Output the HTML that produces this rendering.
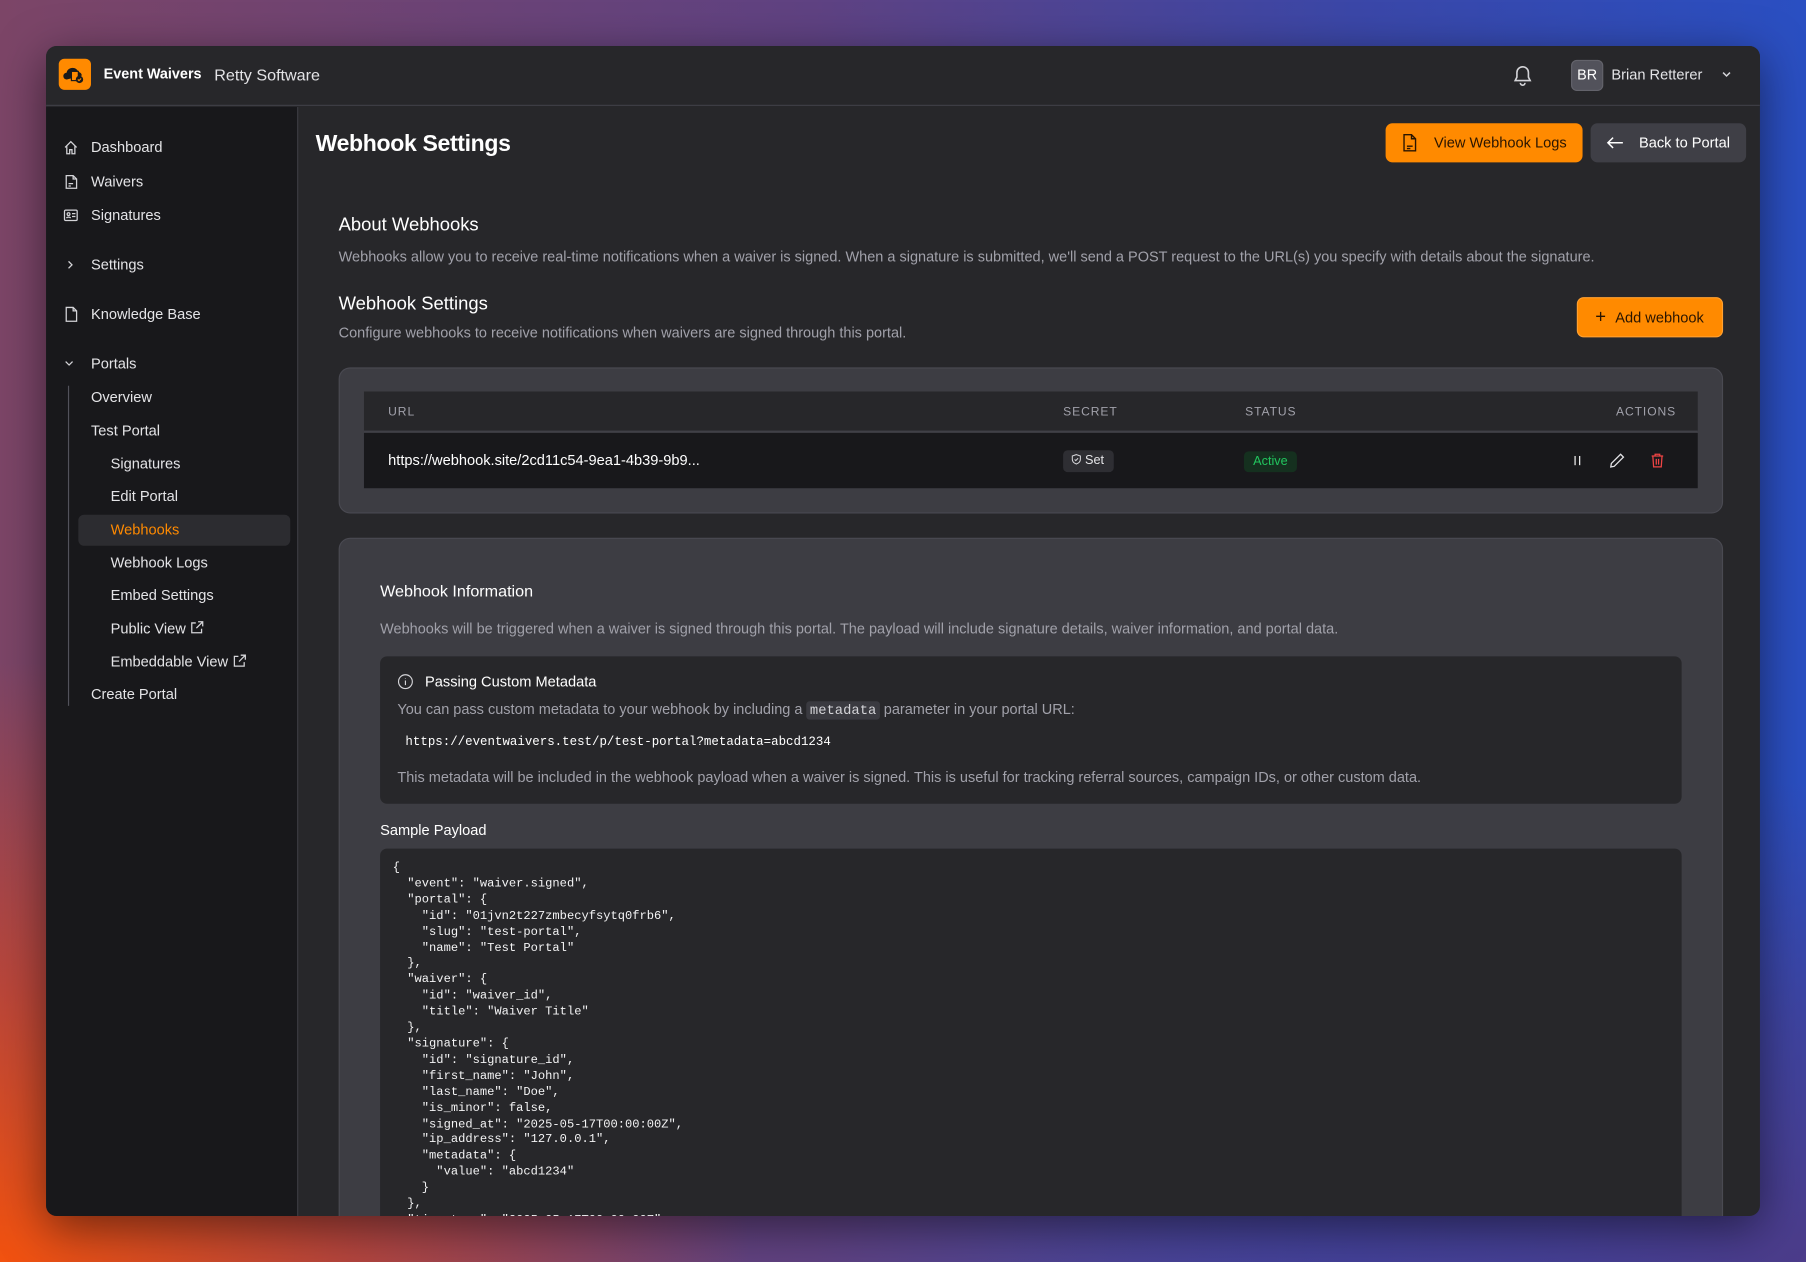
<!DOCTYPE html>
<html><head><meta charset="utf-8"><style>
*{box-sizing:border-box;margin:0;padding:0}
html,body{width:1806px;height:1262px;overflow:hidden}
body{background:linear-gradient(90deg,#7c4567 0%,#5f4282 45%,#3b47a8 75%,#2a4fc2 100%);font-family:"Liberation Sans",sans-serif;position:relative}
.bg2{position:absolute;inset:0;background:radial-gradient(ellipse 1000px 800px at 0% 100%,#f2520f 0%,rgba(210,70,40,.7) 35%,rgba(0,0,0,0) 75%),radial-gradient(ellipse 1000px 600px at 100% 100%,#4c3c8a 0%,rgba(76,60,138,.6) 40%,rgba(0,0,0,0) 80%)}
#s{position:absolute;left:0;top:0;width:1568px;height:1096px;transform:scale(1.15179,1.15146);transform-origin:0 0}
.win{position:absolute;left:40px;top:40px;width:1488px;height:1016px;background:#27272a;border-radius:9px;overflow:hidden;box-shadow:0 10px 40px rgba(0,0,0,.5)}
.top{position:absolute;left:0;top:0;right:0;height:52px;border-bottom:1px solid #3f3f46;background:#27272a}
.side{position:absolute;left:0;top:53px;width:219px;bottom:0;background:#18181b;border-right:1px solid #3f3f46}
.a{position:absolute;white-space:nowrap}
.nav{position:absolute;font-size:12.7px;color:#e4e4e7;white-space:nowrap;transform:translateY(-50%)}
.ic{position:absolute;transform:translateY(-50%)}
.btn{position:absolute;border-radius:6px;font-size:12.7px;display:flex;align-items:center}
.mono{font-family:"Liberation Mono","DejaVu Sans Mono",monospace}
.g{color:#a1a1aa}
</style></head><body><div class="bg2"></div>
<div id="s">
<div class="win">
 <div class="top">
  <div class="a" style="left:11px;top:11px;width:28px;height:27px;background:#ff8a00;border-radius:5px">
   <svg width="28" height="27" viewBox="0 0 28 27"><path d="M7 18c-2 0-3-1.5-3-3s1.2-2.8 2.8-2.8C7.3 9.5 9.5 8 12 8c2.4 0 4.3 1.4 5 3.5 1.8.1 3 1.5 3 3.2" fill="#1a1a1a"/><rect x="11" y="11" width="6" height="8" fill="#ff8a00" stroke="#1a1a1a" stroke-width="1"/><circle cx="18" cy="18" r="3.2" fill="#1a1a1a"/><path d="M16.6 18l1 1 1.8-1.8" stroke="#ff8a00" stroke-width="1" fill="none"/></svg>
  </div>
  <div class="a" style="left:50px;top:17px;font-size:12.5px;color:#fff;font-weight:bold">Event Waivers</div>
  <div class="a" style="left:146px;top:17px;font-size:14px;color:#e4e4e7">Retty Software</div>
  <svg class="a" style="left:1273px;top:16px" width="18" height="20" viewBox="0 0 18 20" fill="none" stroke="#d4d4d8" stroke-width="1.4"><path d="M9 2a5 5 0 0 0-5 5v4l-1.5 3h13L14 11V7a5 5 0 0 0-5-5z"/><path d="M7 16a2 2 0 0 0 4 0"/></svg>
  <div class="a" style="left:1324px;top:12px;width:28px;height:27px;background:#52525b;border-radius:5px;border:1px solid #63636b;color:#fff;font-size:12.5px;text-align:center;line-height:25px">BR</div>
  <div class="a" style="left:1359px;top:18px;font-size:12.7px;color:#e4e4e7">Brian Retterer</div>
  <svg class="a" style="left:1454px;top:21px" width="10" height="8" viewBox="0 0 10 8"><path d="M2 2l3 3 3-3" stroke="#d4d4d8" stroke-width="1.3" fill="none"/></svg>
 </div>
 <div class="side">
  <svg class="ic" style="left:15px;top:35px" width="13" height="13" viewBox="0 0 13 13" fill="none" stroke="#d4d4d8" stroke-width="1.1"><path d="M1.5 6.5L6.5 1.5l5 5M3 5.5V12h2.5V8.5h2V12H10V5.5"/></svg>
  <div class="nav" style="left:39px;top:35px">Dashboard</div>
  <svg class="ic" style="left:16px;top:65px" width="12" height="13" viewBox="0 0 12 13" fill="none" stroke="#d4d4d8" stroke-width="1.1"><path d="M1.5 1h6l3 3v8h-9zM7.5 1v3h3M3.5 8h4M3.5 10h2"/></svg>
  <div class="nav" style="left:39px;top:65px">Waivers</div>
  <svg class="ic" style="left:15px;top:94px" width="13" height="11" viewBox="0 0 13 11" fill="none" stroke="#d4d4d8" stroke-width="1.1"><rect x="1" y="1" width="11" height="9" rx="1"/><circle cx="4.5" cy="4.5" r="1.2"/><path d="M2.8 8c.3-1.2 3.2-1.2 3.4 0M7.5 4h3M7.5 6.5h3"/></svg>
  <div class="nav" style="left:39px;top:94px">Signatures</div>
  <svg class="ic" style="left:17px;top:137px" width="8" height="10" viewBox="0 0 8 10"><path d="M2.5 2l3 3-3 3" stroke="#d4d4d8" stroke-width="1.1" fill="none"/></svg>
  <div class="nav" style="left:39px;top:137px">Settings</div>
  <svg class="ic" style="left:16px;top:180px" width="12" height="14" viewBox="0 0 12 14" fill="none" stroke="#d4d4d8" stroke-width="1.1"><path d="M1.5 1h6l3 3v9h-9zM7.5 1v3h3"/></svg>
  <div class="nav" style="left:39px;top:180px">Knowledge Base</div>
  <svg class="ic" style="left:15px;top:223px" width="10" height="8" viewBox="0 0 10 8"><path d="M2 2l3 3 3-3" stroke="#d4d4d8" stroke-width="1.1" fill="none"/></svg>
  <div class="nav" style="left:39px;top:223px">Portals</div>
  <div class="a" style="left:19px;top:242px;width:1px;height:278px;background:#52525b"></div>
  <div class="nav" style="left:39px;top:252px">Overview</div>
  <div class="nav" style="left:39px;top:281px">Test Portal</div>
  <div class="nav" style="left:56px;top:310px">Signatures</div>
  <div class="nav" style="left:56px;top:338px">Edit Portal</div>
  <div class="a" style="left:28px;top:354px;width:184px;height:27px;background:#2c2c30;border-radius:5px"></div>
  <div class="nav" style="left:56px;top:367px;color:#ff8a00">Webhooks</div>
  <div class="nav" style="left:56px;top:396px">Webhook Logs</div>
  <div class="nav" style="left:56px;top:424px">Embed Settings</div>
  <div class="nav" style="left:56px;top:453px">Public View <svg width="12" height="12" viewBox="0 0 12 12" fill="none" stroke="#d4d4d8" stroke-width="1.1" style="vertical-align:-1px"><path d="M5 2H1.5v8.5H10V7M7 1h4v4M11 1L5.5 6.5"/></svg></div>
  <div class="nav" style="left:56px;top:482px">Embeddable View <svg width="12" height="12" viewBox="0 0 12 12" fill="none" stroke="#d4d4d8" stroke-width="1.1" style="vertical-align:-1px"><path d="M5 2H1.5v8.5H10V7M7 1h4v4M11 1L5.5 6.5"/></svg></div>
  <div class="nav" style="left:39px;top:510px">Create Portal</div>
 </div>
 <div class="a" style="left:234px;top:74px;font-size:20px;font-weight:bold;color:#fff;letter-spacing:-.3px">Webhook Settings</div>
 <div class="btn" style="left:1163px;top:67px;width:171px;height:34px;background:#ff8a00;color:#2a1500">
  <svg style="margin-left:14px" width="14" height="16" viewBox="0 0 14 16" fill="none" stroke="#2a1500" stroke-width="1.2"><path d="M2 1h6.5L12 4.5V15H2zM8.5 1v3.5H12M4.5 11h5M4.5 13h3"/></svg>
  <span style="margin-left:14px">View Webhook Logs</span></div>
 <div class="btn" style="left:1341px;top:67px;width:135px;height:34px;background:#3f3f46;color:#fff">
  <svg style="margin-left:13px" width="16" height="12" viewBox="0 0 16 12" fill="none" stroke="#fff" stroke-width="1.3"><path d="M15 6H2M6.5 1.5L2 6l4.5 4.5"/></svg>
  <span style="margin-left:13px">Back to Portal</span></div>

 <div class="a" style="left:254px;top:147px;font-size:16px;color:#fff">About Webhooks</div>
 <div class="a g" style="left:254px;top:176px;font-size:12.6px">Webhooks allow you to receive real-time notifications when a waiver is signed. When a signature is submitted, we'll send a POST request to the URL(s) you specify with details about the signature.</div>
 <div class="a" style="left:254px;top:216px;font-size:16px;color:#fff">Webhook Settings</div>
 <div class="a g" style="left:254px;top:242px;font-size:12.6px">Configure webhooks to receive notifications when waivers are signed through this portal.</div>
 <div class="btn" style="left:1329px;top:218px;width:127px;height:35px;background:#ff8a00;color:#2a1500;border:1px solid #ffa030">
  <span style="margin-left:15px;font-size:16px;line-height:1">+</span><span style="margin-left:8px">Add webhook</span></div>

 <div class="a" style="left:254px;top:279px;width:1202px;height:127px;background:#3d3d43;border:1px solid #4a4a52;border-radius:10px"></div>
 <div class="a" style="left:276px;top:300px;width:1158px;height:35px;background:#27272a;border-bottom:1px solid #44444c"></div>
 <div class="a" style="left:276px;top:336px;width:1158px;height:48px;background:#18181b"></div>
 <div class="a g" style="left:297px;top:312px;font-size:10.5px;letter-spacing:.8px">URL</div>
 <div class="a g" style="left:883px;top:312px;font-size:10.5px;letter-spacing:.8px">SECRET</div>
 <div class="a g" style="left:1041px;top:312px;font-size:10.5px;letter-spacing:.8px">STATUS</div>
 <div class="a g" style="left:1363px;top:312px;font-size:10.5px;letter-spacing:.8px">ACTIONS</div>
 <div class="a" style="left:297px;top:353px;font-size:12.7px;color:#fff">https://webhook.site/2cd11c54-9ea1-4b39-9b9...</div>
 <div class="a" style="left:883px;top:351px;width:44px;height:19px;background:#2e2e33;border-radius:4px;color:#e4e4e7;font-size:11px;line-height:19px;padding-left:7px">
  <svg width="9" height="10" viewBox="0 0 9 10" fill="none" stroke="#d4d4d8" stroke-width=".9" style="vertical-align:-1px"><path d="M4.5 .8L8 2v3c0 2-1.6 3.3-3.5 4C2.6 8.3 1 7 1 5V2z"/><path d="M3 5l1 1 2-2"/></svg> Set</div>
 <div class="a" style="left:1040px;top:352px;width:46px;height:18px;background:#15301f;border-radius:4px;color:#22c55e;font-size:11px;line-height:18px;text-align:center">Active</div>
 <div class="a" style="left:1327px;top:356px;width:1px;height:8px;background:#fff"></div>
 <div class="a" style="left:1331px;top:356px;width:1px;height:8px;background:#fff"></div>
 <svg class="a" style="left:1357px;top:353px" width="14" height="14" viewBox="0 0 14 14" fill="none" stroke="#e4e4e7" stroke-width="1.1"><path d="M10 1.5l2.5 2.5L4.5 12 1.5 12.5 2 9.5z"/></svg>
 <svg class="a" style="left:1393px;top:353px" width="12" height="14" viewBox="0 0 12 14" fill="none" stroke="#ef4444" stroke-width="1.1"><path d="M1 3h10M4 3V1.5h4V3M2 3l.7 9.5h6.6L10 3M5 5.5v5M7 5.5v5"/></svg>

 <div class="a" style="left:254px;top:427px;width:1202px;height:620px;background:#3d3d43;border:1px solid #4a4a52;border-radius:10px"></div>
 <div class="a" style="left:290px;top:465px;font-size:14px;color:#fff">Webhook Information</div>
 <div class="a g" style="left:290px;top:499px;font-size:12.6px">Webhooks will be triggered when a waiver is signed through this portal. The payload will include signature details, waiver information, and portal data.</div>
 <div class="a" style="left:290px;top:530px;width:1130px;height:128px;background:#27272a;border-radius:6px"></div>
 <svg class="a" style="left:305px;top:545px" width="14" height="14" viewBox="0 0 14 14" fill="none" stroke="#d4d4d8" stroke-width="1"><circle cx="7" cy="7" r="6"/><path d="M7 6v4M7 4v.5"/></svg>
 <div class="a" style="left:329px;top:545px;font-size:12.7px;color:#fff">Passing Custom Metadata</div>
 <div class="a g" style="left:305px;top:569px;font-size:12.6px">You can pass custom metadata to your webhook by including a <span class="mono" style="background:#3a3a40;color:#d4d4d8;padding:1px 3px;border-radius:3px;font-size:12px">metadata</span> parameter in your portal URL:</div>
 <div class="a mono" style="left:312px;top:599px;font-size:10.8px;color:#fff">https://eventwaivers.test/p/test-portal?metadata=abcd1234</div>
 <div class="a g" style="left:305px;top:628px;font-size:12.6px">This metadata will be included in the webhook payload when a waiver is signed. This is useful for tracking referral sources, campaign IDs, or other custom data.</div>
 <div class="a" style="left:290px;top:674px;font-size:12.7px;color:#fff">Sample Payload</div>
 <div class="a" style="left:290px;top:697px;width:1130px;height:340px;background:#27272a;border-radius:6px"></div>
 <pre class="mono" style="position:absolute;white-space:pre;left:301px;top:708px;font-size:10.5px;line-height:13.9px;color:#f4f4f5">{
  "event": "waiver.signed",
  "portal": {
    "id": "01jvn2t227zmbecyfsytq0frb6",
    "slug": "test-portal",
    "name": "Test Portal"
  },
  "waiver": {
    "id": "waiver_id",
    "title": "Waiver Title"
  },
  "signature": {
    "id": "signature_id",
    "first_name": "John",
    "last_name": "Doe",
    "is_minor": false,
    "signed_at": "2025-05-17T00:00:00Z",
    "ip_address": "127.0.0.1",
    "metadata": {
      "value": "abcd1234"
    }
  },
  "timestamp": "2025-05-17T00:00:00Z"
}</pre>
</div>
</div>
</body></html>
